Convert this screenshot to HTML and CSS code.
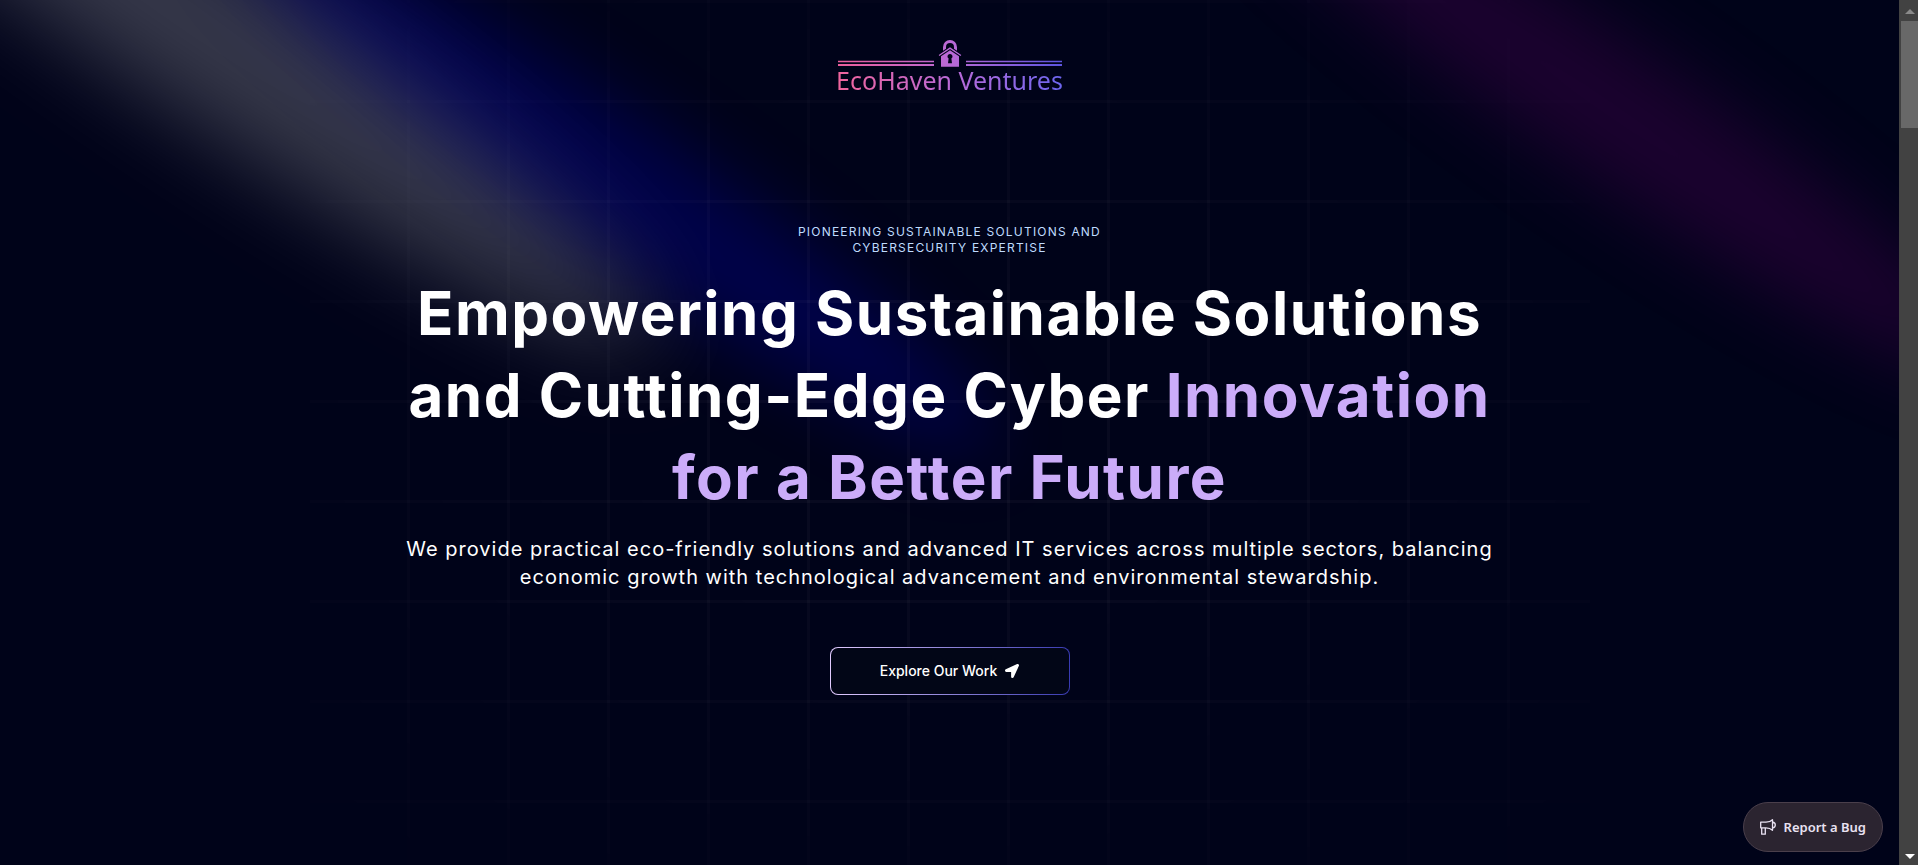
FILE: index.html
```html
<!DOCTYPE html>
<html lang="en">
<head>
<meta charset="utf-8">
<meta name="viewport" content="width=device-width, initial-scale=1">
<title>EcoHaven Ventures</title>
<link rel="stylesheet" href="styles.css">
</head>
<body>
<div class="window">
  <main class="page">
    <div class="stage" aria-hidden="true">
      <svg class="spotlight spotlight-white" viewBox="0 0 3787 2842" fill="none">
        <defs><filter id="glow" x="0" y="0" width="3787" height="2842" filterUnits="userSpaceOnUse" color-interpolation-filters="sRGB"><feGaussianBlur stdDeviation="151"/></filter></defs>
        <g filter="url(#glow)"><ellipse cx="1924.71" cy="273.501" rx="1924.71" ry="273.501" transform="matrix(-0.822377 -0.568943 -0.568943 0.822377 3631.88 2291.09)" fill="white" fill-opacity="0.21"/></g>
      </svg>
      <svg class="spotlight spotlight-purple" viewBox="0 0 3787 2842" fill="none">
        <g filter="url(#glow)"><ellipse cx="1924.71" cy="273.501" rx="1924.71" ry="273.501" transform="matrix(-0.822377 -0.568943 -0.568943 0.822377 3631.88 2291.09)" fill="purple" fill-opacity="0.21"/></g>
      </svg>
      <svg class="spotlight spotlight-blue" viewBox="0 0 3787 2842" fill="none">
        <g filter="url(#glow)"><ellipse cx="1924.71" cy="273.501" rx="1924.71" ry="273.501" transform="matrix(-0.822377 -0.568943 -0.568943 0.822377 3631.88 2291.09)" fill="blue" fill-opacity="0.21"/></g>
      </svg>
      <div class="grid"></div>
    </div>

    <header class="brand">
      <svg class="brand-mark" viewBox="0 0 224 28" aria-hidden="true">
        <defs><linearGradient id="brand" gradientUnits="userSpaceOnUse" x1="0" y1="0" x2="224" y2="0"><stop offset="0" stop-color="#ed5f9c"/><stop offset=".5" stop-color="#ba69d6"/><stop offset="1" stop-color="#5d55e0"/></linearGradient></defs>
        <g fill="url(#brand)">
          <path d="M0 20.700h96v1.600H0zM0 24h96v2H0zM128 20.700h96v1.600h-96zM128 24h96v2h-96z"/>
          <path d="M105 10.800V7.200a7 7.200 0 0 1 14 0v3.600l-3-2.100V7.200a4 4.200 0 0 0-8 0v1.500z"/>
          <path d="M112 7.300l11.300 7.600-.7 1L112 9l-10.600 6.900-.7-1z"/>
          <path fill-rule="evenodd" d="M112 10.300l9 5.900v10.500h-18V16.200zM112 14a2.500 2.500 0 0 0-1.400 4.600L110 23.300h4l-.6-4.700A2.500 2.500 0 0 0 112 14z"/>
        </g>
      </svg>
      <span class="brand-name">EcoHaven Ventures</span>
    </header>

    <section class="hero">
      <p class="eyebrow">Pioneering Sustainable Solutions and Cybersecurity Expertise</p>
      <h1 class="headline">Empowering Sustainable Solutions and Cutting-Edge Cyber <span class="accent">Innovation</span> <span class="accent">for a Better Future</span></h1>
      <p class="lead">We provide practical eco-friendly solutions and advanced IT services across multiple sectors, balancing economic growth with technological advancement and environmental stewardship.</p>
      <button class="cta" type="button">
        <span class="cta-face">Explore Our Work
          <svg class="cta-icon" viewBox="0 0 512 512" aria-hidden="true"><path fill="currentColor" d="M444.520 3.520L28.740 195.420c-47.970 22.390-31.980 92.750 19.190 92.750h175.910v175.910c0 51.170 70.360 67.170 92.750 19.190l191.900-415.780c15.990-38.390-25.590-79.970-63.970-63.970z"/></svg>
        </span>
      </button>
    </section>

    <button class="bug" type="button">
      <svg class="bug-icon" viewBox="0 0 16 16" fill="none" stroke="currentColor" stroke-width="1.300" stroke-linejoin="round" aria-hidden="true"><path d="M.7 3.200h5.300q4 0 6.500-2.500v10.600Q10 8.800 6 8.800H.7zM1.700 8.800v6.400h3.600V8.800M12.500 3q2.800.5 2.800 3t-2.800 3"/></svg>
      Report a Bug
    </button>
  </main>
  <div class="scrollbar" aria-hidden="true">
    <span class="arrow arrow-up"></span>
    <span class="thumb"></span>
    <span class="arrow arrow-down"></span>
  </div>
</div>
</body>
</html>
```
FILE: styles.css
```css
* { box-sizing: border-box; }

body {
  margin: 0;
  background: #000319;
  color: #fff;
  font-family: Inter, "Liberation Sans", sans-serif;
}

.window {
  display: flex;
  height: 100vh;
  overflow: hidden;
}

.page {
  position: relative;
  flex: 1;
  min-width: 0;
  overflow: hidden;
  padding: 40px 20px;
}

/* Backdrop: light beams and a fading grid */
.stage {
  position: absolute;
  top: 0;
  left: 50%;
  width: 100%;
  max-width: 1320px;
  height: 100vh;
  transform: translateX(-50%);
  pointer-events: none;
}

.spotlight {
  position: absolute;
  aspect-ratio: 3787 / 2842;
  transform: translate(-50%, -40%);
}

.spotlight-white { left: 160px; top: -80px; height: 100vh; transform: translate(-74%, -40%); }
.spotlight-purple { left: 100%; top: 40px; height: 80vh; }
.spotlight-blue { left: 320px; top: 112px; height: 80vh; }

.grid {
  position: absolute;
  inset: 0 20px;
  background-image:
    linear-gradient(to left, rgba(255, 255, 255, .03) 3px, transparent 3px),
    linear-gradient(to bottom, rgba(255, 255, 255, .03) 3px, transparent 3px);
  background-size: 100px 100px;
  mask-image: radial-gradient(ellipse at center, #000 20%, transparent 105%);
}

/* Logo */
.brand {
  position: relative;
  display: flex;
  flex-direction: column;
  align-items: center;
}

.brand-mark {
  display: block;
  width: 224px;
  height: 28px;
}

.brand-name {
  background: linear-gradient(90deg, #f0649c, #b96ad8 52%, #6c66f0);
  background-clip: text;
  color: transparent;
  font: 400 25px/24px "Noto Sans", sans-serif;
}

/* Hero */
.hero {
  position: relative;
  display: flex;
  flex-direction: column;
  align-items: center;
  max-width: 1120px;
  margin: 132px auto 0;
  text-align: center;
}

.eyebrow {
  max-width: 320px;
  margin: 0;
  color: #bfdbfe;
  font-size: 12px;
  line-height: 16px;
  letter-spacing: .1em;
  text-transform: uppercase;
}

.headline {
  margin: 16px 0 17px;
  font-size: 60px;
  font-weight: 700;
  line-height: 82px;
  letter-spacing: .025em;
}

.accent { color: #cbacf9; }

.lead {
  margin: 0 0 56px;
  font-size: 20px;
  line-height: 28px;
  letter-spacing: .05em;
}

.cta {
  width: 240px;
  height: 48px;
  padding: 1px;
  border: 0;
  border-radius: 8px;
  background: linear-gradient(90deg, #e2cbff, #393bb2);
  color: #fff;
  font: 500 14px/20px Inter, sans-serif;
}

.cta-face {
  display: flex;
  align-items: center;
  justify-content: center;
  gap: 8px;
  height: 100%;
  border-radius: 7px;
  background: #020617;
}

.cta-icon {
  width: 14px;
  height: 14px;
}

.bug {
  position: absolute;
  right: 16px;
  bottom: 13px;
  display: flex;
  align-items: center;
  gap: 8px;
  height: 50px;
  padding: 0 16px;
  border: 1px solid #4a3f4b;
  border-radius: 25px;
  background: #2b2430;
  color: #e9e2f2;
  font: 600 13px/20px "Noto Sans", sans-serif;
}

.bug-icon {
  width: 16px;
  height: 16px;
}

/* Window scrollbar */
.scrollbar {
  display: flex;
  flex-direction: column;
  align-items: center;
  width: 19px;
  padding: 9px 0 6px 2px;
  background: #424242;
}

.arrow {
  border: 5px solid transparent;
}

.arrow-up {
  border-top: 0;
  border-bottom-color: #8a8a8a;
}

.thumb {
  width: 100%;
  height: 107px;
  margin-top: 7px;
  background: #686868;
}

.arrow-down {
  margin-top: auto;
  border-bottom: 0;
  border-top-color: #fff;
}
```
